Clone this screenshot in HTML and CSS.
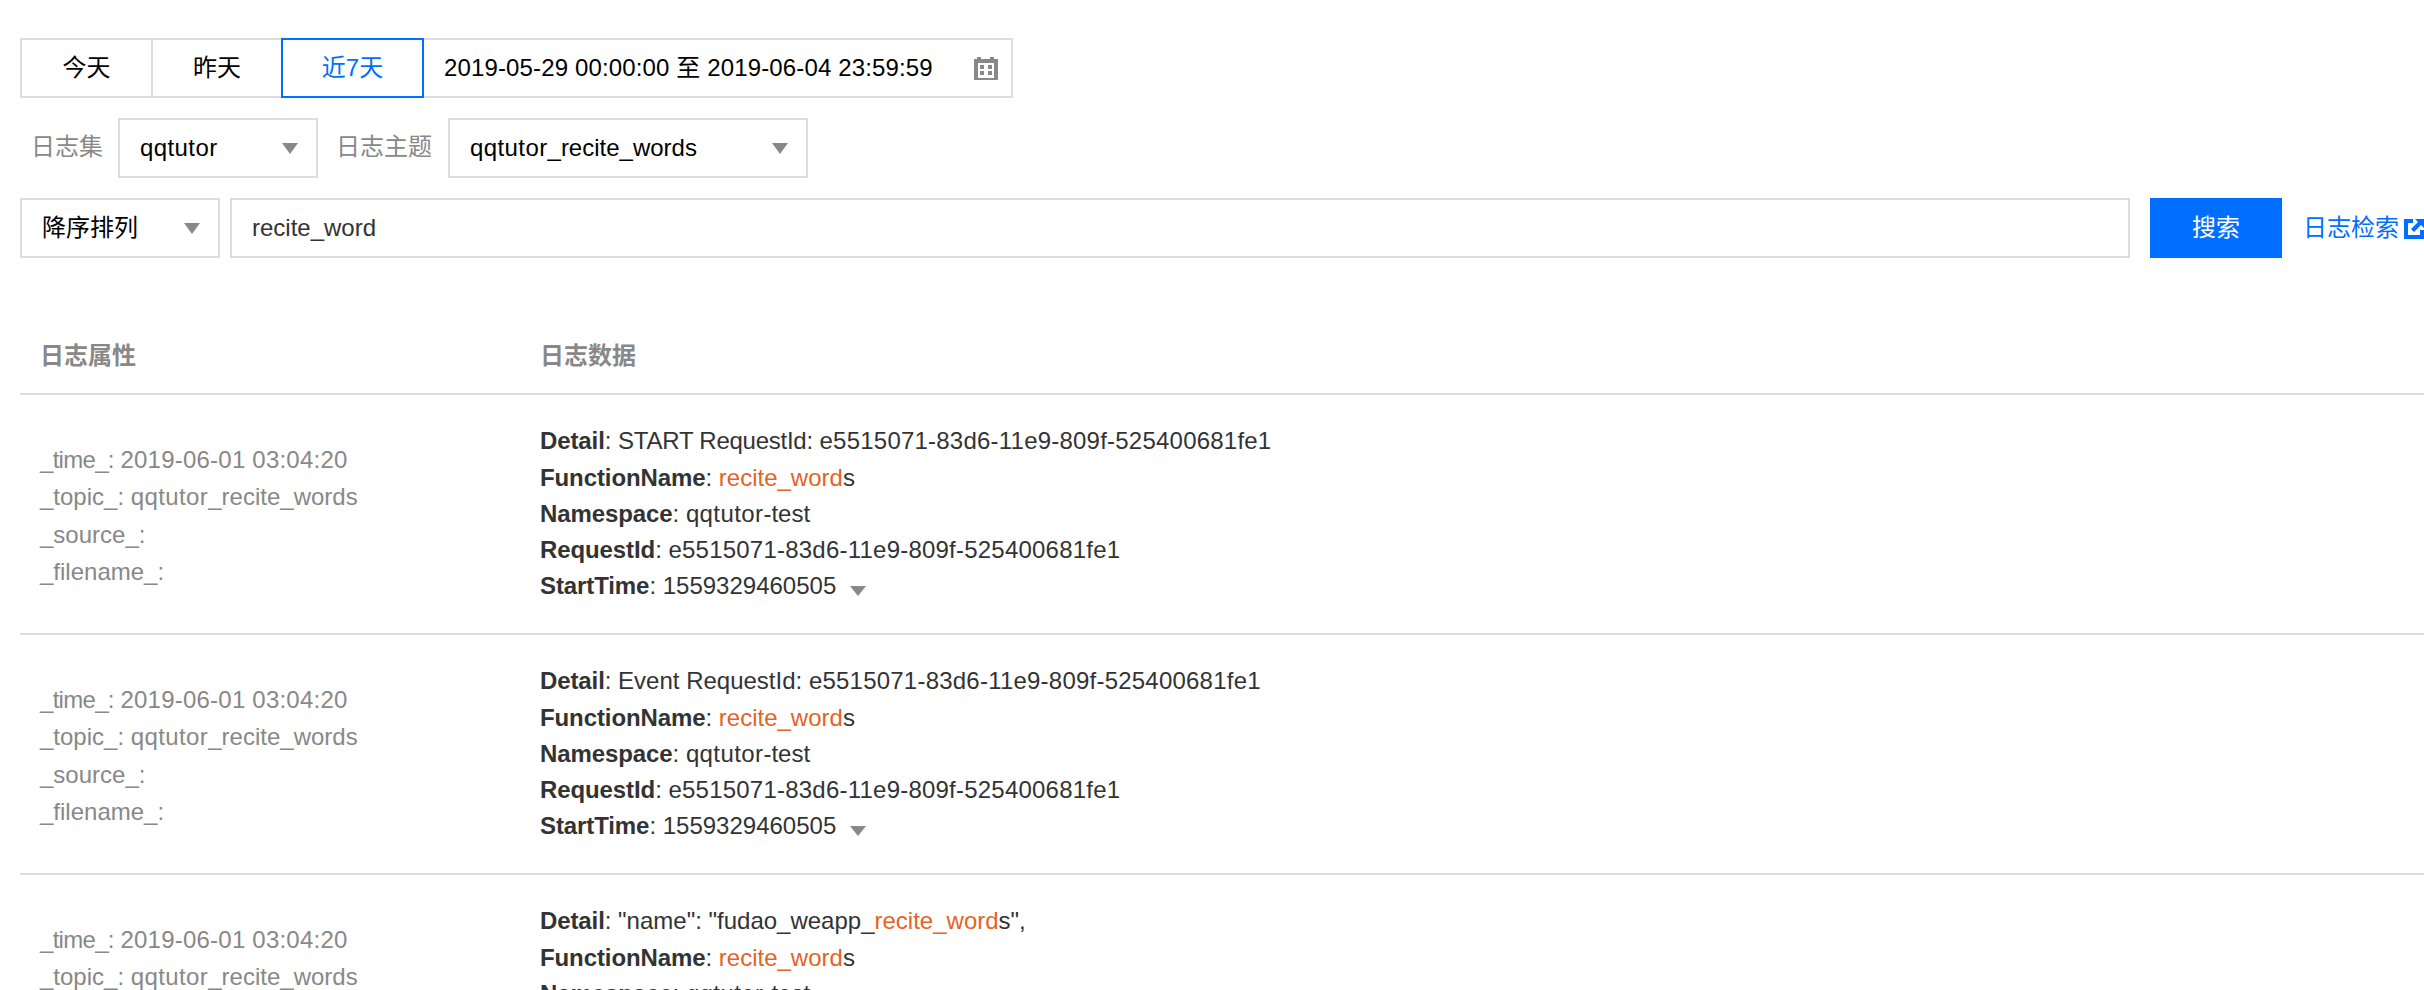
FILE: index.html
```html
<!DOCTYPE html>
<html lang="zh">
<head>
<meta charset="utf-8">
<title>日志检索</title>
<link rel="stylesheet" href="styles.css">
</head>
<body>
<main class="page">
  <div class="toolbar time-row">
    <button class="tab">今天</button>
    <button class="tab tab-second">昨天</button>
    <button class="tab tab-active">近7天</button>
    <div class="range">
      <span class="num-tight">2019-05-29 00:00:00 至 2019-06-04 23:59:59</span>
      <svg class="cal" viewBox="0 0 24 23" width="24" height="23"><path fill="#888" fill-rule="evenodd" d="M0 2h3V0h4v2h9V0h4v2h4v21H0zM4 6v15h16V6zM6 8h4v4H6zm8 0h4v4h-4zM6 14h4v4H6zm8 0h4v4h-4z"/></svg>
    </div>
  </div>
  <div class="toolbar filter-row">
    <label class="field-label label-set">日志集</label>
    <div class="select select-set"><span class="qq">qqtutor</span><i class="caret"></i></div>
    <label class="field-label label-topic">日志主题</label>
    <div class="select select-topic"><span><span class="qq">qqtutor</span>_recite_words</span><i class="caret"></i></div>
  </div>
  <div class="toolbar search-row">
    <div class="select select-order"><span>降序排列</span><i class="caret"></i></div>
    <div class="search-input">recite_word</div>
    <button class="search-btn">搜索</button>
    <a class="search-link">日志检索<svg class="ext" viewBox="0 0 20 20" width="20" height="20"><path fill="#006eff" d="M0 0H9V4H4V16H16V11H20V20H0zM11 0H20V9L17 6 10 13 7 10 14 3z"/></svg></a>
  </div>
  <section class="log-table">
    <div class="log-head"><div>日志属性</div><div>日志数据</div></div>
    <article class="log-row">
      <div class="attrs"><p><span class="key-time">_time_:</span> <span class="num">2019-06-01 03:04:20</span></p><p>_topic_: <span class="qq">qqtutor</span>_recite_words</p><p>_source_:</p><p>_filename_:</p></div>
      <div class="data">
        <p><b>Detail</b>: <span class="kern">START RequestId:</span> <span class="num">e5515071-83d6-11e9-809f-525400681fe1</span></p>
        <p><b>FunctionName</b>: <em>recite_word</em>s</p>
        <p><b>Namespace</b>: <span class="qq">qqtutor</span>-test</p>
        <p><b>RequestId</b>: <span class="num">e5515071-83d6-11e9-809f-525400681fe1</span></p>
        <p><b>StartTime</b>: 1559329460505<i class="caret caret-more"></i></p>
      </div>
    </article>
    <article class="log-row">
      <div class="attrs"><p><span class="key-time">_time_:</span> <span class="num">2019-06-01 03:04:20</span></p><p>_topic_: <span class="qq">qqtutor</span>_recite_words</p><p>_source_:</p><p>_filename_:</p></div>
      <div class="data">
        <p><b>Detail</b>: Event RequestId: <span class="num">e5515071-83d6-11e9-809f-525400681fe1</span></p>
        <p><b>FunctionName</b>: <em>recite_word</em>s</p>
        <p><b>Namespace</b>: <span class="qq">qqtutor</span>-test</p>
        <p><b>RequestId</b>: <span class="num">e5515071-83d6-11e9-809f-525400681fe1</span></p>
        <p><b>StartTime</b>: 1559329460505<i class="caret caret-more"></i></p>
      </div>
    </article>
    <article class="log-row">
      <div class="attrs"><p><span class="key-time">_time_:</span> <span class="num">2019-06-01 03:04:20</span></p><p>_topic_: <span class="qq">qqtutor</span>_recite_words</p><p>_source_:</p><p>_filename_:</p></div>
      <div class="data">
        <p><b>Detail</b>: "name": "fudao_weapp_<em>recite_word</em>s",</p>
        <p><b>FunctionName</b>: <em>recite_word</em>s</p>
        <p><b>Namespace</b>: <span class="qq">qqtutor</span>-test</p>
        <p><b>RequestId</b>: <span class="num">e5515071-83d6-11e9-809f-525400681fe1</span></p>
        <p><b>StartTime</b>: 1559329460505<i class="caret caret-more"></i></p>
      </div>
    </article>
  </section>
</main>
</body>
</html>
```
FILE: styles.css
```css
* { box-sizing: border-box; }
html, body { margin: 0; height: 100%; overflow: hidden; background: #fff; }
body { font: 24px/36px "Liberation Sans", "Noto Sans CJK SC", sans-serif; color: #000; }
.page { width: 2424px; padding: 38px 0 0 20px; }
p { margin: 0; }
em { font-style: normal; color: #e5641f; }
b { font-weight: 700; color: #333; letter-spacing: -.1px; }
.num { letter-spacing: .22px; }
.num-tight { letter-spacing: .14px; }
.qq { letter-spacing: .4px; }
.kern { letter-spacing: -.25px; }
.key-time { letter-spacing: -.7px; }
.toolbar { display: flex; align-items: stretch; height: 60px; margin-bottom: 20px; }
button { font: inherit; background: #fff; color: #000; cursor: pointer; padding: 0; }
.tab { width: 131px; border: 2px solid #ddd; border-right: 0; }
.tab-second { width: 130px; }
.tab-active { width: 143px; border: 2px solid #006eff; color: #006eff; }
.range { width: 589px; border: 2px solid #ddd; border-left: 0; display: flex; align-items: center; justify-content: space-between; padding: 0 13px 0 20px; }
.cal { display: block; flex: none; }
.field-label { color: #888; display: flex; align-items: center; padding-bottom: 2px; }
.label-set { padding-left: 11px; width: 98px; }
.label-topic { padding-left: 18px; width: 130px; }
.select { border: 2px solid #ddd; display: flex; align-items: center; justify-content: space-between; padding: 0 18px 0 20px; }
.select-set { width: 200px; }
.select-topic { width: 360px; }
.select-order { width: 200px; }
.caret { display: block; width: 0; height: 0; border: 8px solid transparent; border-top: 11px solid #888; border-bottom: 0; flex: none; }
.search-input { flex: 1; margin-left: 10px; border: 2px solid #ddd; padding: 0 20px; display: flex; align-items: center; color: #333; }
.search-btn { width: 132px; margin-left: 20px; border: 0; background: #006eff; color: #fff; }
.search-link { width: 142px; padding-left: 21px; display: flex; align-items: center; gap: 5px; color: #006eff; flex: none; white-space: nowrap; }
.ext { display: block; flex: none; margin-top: 2px; }
.log-table { margin-top: 60px; }
.log-head { display: grid; grid-template-columns: 520px 1fr; height: 77px; align-items: center; border-bottom: 2px solid #ddd; color: #888; font-weight: 700; }
.log-head > div { padding-left: 20px; }
.log-head > div + div { padding-left: 0; }
.log-row { display: grid; grid-template-columns: 520px 1fr; height: 240px; align-items: center; border-bottom: 2px solid #ddd; }
.attrs { padding-left: 20px; color: #888; line-height: 37.5px; padding-top: 3px; }
.data { color: #333; line-height: 36.3px; }
.caret-more { display: inline-block; margin-left: 14px; vertical-align: -2px; border-width: 8px; border-top-width: 10px; border-bottom-width: 0; }
```
